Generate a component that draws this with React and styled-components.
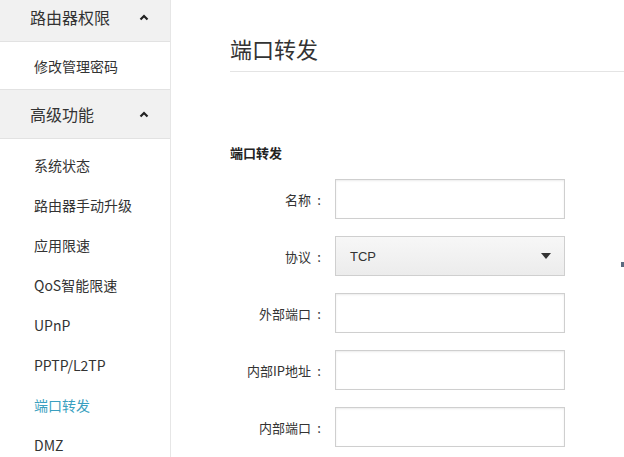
import React from 'react'
import styled, { createGlobalStyle } from 'styled-components'

const GlobalStyle = createGlobalStyle`
  html, body {
    margin: 0;
    padding: 0;
    background: #fff;
    font-family: "Microsoft YaHei", "Noto Sans CJK SC", "Liberation Sans", sans-serif;
    overflow: hidden;
  }
`

const Page = styled.div`
  display: flex;
  width: 624px;
  height: 457px;
  overflow: hidden;
  position: relative;
`

const Sidebar = styled.div`
  width: 170px;
  flex-shrink: 0;
  border-right: 1px solid #e6e6e6;
  margin-top: -7px;
`

const GroupHeader = styled.div`
  height: 48px;
  background: #f1f1f1;
  border-bottom: 1px solid #e2e2e2;
  display: flex;
  align-items: center;
  justify-content: space-between;
  padding: 0 21px 0 30px;
  font-size: 16px;
  color: #333;
`

const Chevron = styled.svg`
  width: 10px;
  height: 7px;
`

const SubList = styled.div`
  padding: ${p => (p.$single ? '0' : '6px 0 0')};
  border-bottom: ${p => (p.$single ? '1px solid #e2e2e2' : 'none')};
`

const SubItem = styled.div`
  height: ${p => (p.$tall ? '47px' : '40px')};
  display: flex;
  align-items: center;
  padding-left: 34px;
  font-size: 14px;
  color: ${p => (p.$active ? '#3a9fc0' : '#333')};
`

const Main = styled.div`
  flex: 1;
  padding: 30px 0 0 59px;
`

const Title = styled.h1`
  margin: 0;
  font-size: 22px;
  font-weight: normal;
  color: #333;
  line-height: 36px;
  padding-bottom: 5px;
  border-bottom: 1px solid #e4e4e4;
`

const SectionTitle = styled.div`
  margin-top: 72px;
  font-size: 13px;
  font-weight: bold;
  color: #222;
  line-height: 18px;
`

const Form = styled.div`
  margin-top: 17px;
  display: flex;
  flex-direction: column;
  gap: 17px;
`

const Row = styled.div`
  display: flex;
  align-items: center;
`

const Label = styled.label`
  width: 97px;
  padding-right: 8px;
  display: flex;
  justify-content: flex-end;
  align-items: center;
  font-size: 13px;
  color: #333;
`

const Colon = styled.span`
  display: inline-block;
  width: 16px;
  text-align: center;
`

const Input = styled.input`
  box-sizing: border-box;
  width: 230px;
  height: 40px;
  border: 1px solid #cfcfcf;
  box-shadow: inset 0 1px 2px rgba(0, 0, 0, 0.08);
  background: #fff;
  outline: none;
  padding: 0 14px;
  font-size: 13px;
`

const Select = styled.div`
  box-sizing: border-box;
  width: 230px;
  height: 40px;
  border: 1px solid #cfcfcf;
  background: linear-gradient(#f7f7f7, #ececec);
  display: flex;
  align-items: center;
  justify-content: space-between;
  padding: 0 13px 0 14px;
  font-size: 13px;
  font-family: "Liberation Sans", "Noto Sans CJK SC", sans-serif;
  color: #333;
`

const Caret = styled.svg`
  width: 10px;
  height: 6px;
`

const EdgeMark = styled.span`
  position: absolute;
  left: 621px;
  top: 262px;
  width: 3px;
  height: 5px;
  background: #5a6b80;
`

const ChevronUp = () => (
  <Chevron viewBox="0 0 10 7">
    <path d="M1.5 5.5 L5 2 L8.5 5.5" fill="none" stroke="#222" strokeWidth="2.2" />
  </Chevron>
)

const subItems = ['系统状态', '路由器手动升级', '应用限速', 'QoS智能限速', 'UPnP', 'PPTP/L2TP', '端口转发', 'DMZ']

const fields = [
  { label: '名称' },
  { label: '协议', select: 'TCP' },
  { label: '外部端口' },
  { label: '内部IP地址' },
  { label: '内部端口' },
]

const App = () => {
  return (
    <Page>
      <GlobalStyle />
      <Sidebar>
        <GroupHeader>路由器权限<ChevronUp /></GroupHeader>
        <SubList $single>
          <SubItem $tall>修改管理密码</SubItem>
        </SubList>
        <GroupHeader>高级功能<ChevronUp /></GroupHeader>
        <SubList>
          {subItems.map(name => (
            <SubItem key={name} $active={name === '端口转发'}>{name}</SubItem>
          ))}
        </SubList>
      </Sidebar>
      <Main>
        <Title>端口转发</Title>
        <SectionTitle>端口转发</SectionTitle>
        <Form>
          {fields.map(f => (
            <Row key={f.label}>
              <Label>{f.label}<Colon>:</Colon></Label>
              {f.select ? (
                <Select>
                  {f.select}
                  <Caret viewBox="0 0 10 6">
                    <path d="M0 0 H10 L5 6 Z" fill="#333" />
                  </Caret>
                </Select>
              ) : (
                <Input />
              )}
            </Row>
          ))}
        </Form>
      </Main>
      <EdgeMark />
    </Page>
  )
}

export default App
